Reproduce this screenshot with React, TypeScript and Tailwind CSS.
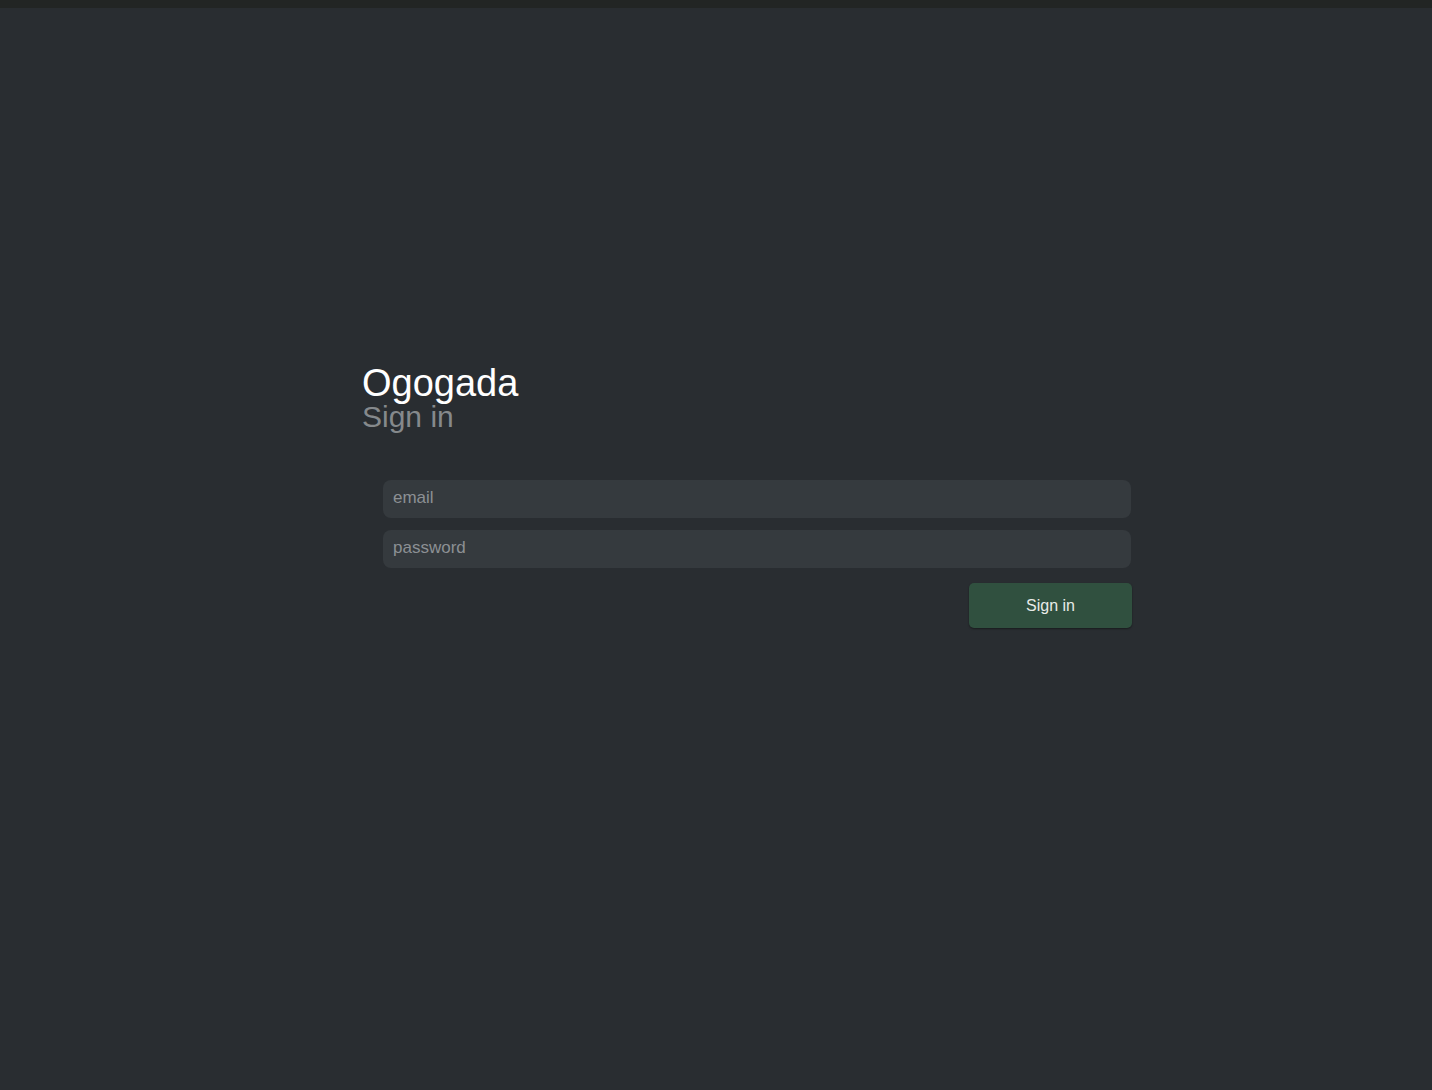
export default function App() {
  return (
    <div className="min-h-screen bg-[#292d31] font-['Liberation_Sans',Arial,sans-serif]">
      <div className="h-2 bg-[#222524]" />
      <main className="pl-[362px] pt-[356px]">
        <div className="w-[770px]">
          <h1 className="text-[38px] leading-[38px] text-white">Ogogada</h1>
          <h2 className="text-[30px] leading-[30px] text-[#85898c]">Sign in</h2>

          <form className="mt-[48px] flex flex-col" onSubmit={(e) => e.preventDefault()}>
            <input
              type="email"
              placeholder="email"
              className="ml-[21px] mr-[1px] h-[38px] rounded-lg bg-[#353a3e] px-[10px] pb-[2px] text-[17px] text-white placeholder:text-[#8c9094] outline-none"
            />
            <input
              type="password"
              placeholder="password"
              className="ml-[21px] mr-[1px] mt-3 h-[38px] rounded-lg bg-[#353a3e] px-[10px] pb-[2px] text-[17px] text-white placeholder:text-[#8c9094] outline-none"
            />
            <div className="mt-[15px] flex justify-end">
              <button
                type="submit"
                className="h-[45px] w-[163px] rounded-[5px] bg-[#30503f] text-[16px] text-[#e8ebe8] shadow-[0_1px_2px_rgba(0,0,0,0.4)]"
              >
                Sign in
              </button>
            </div>
          </form>
        </div>
      </main>
    </div>
  )
}
